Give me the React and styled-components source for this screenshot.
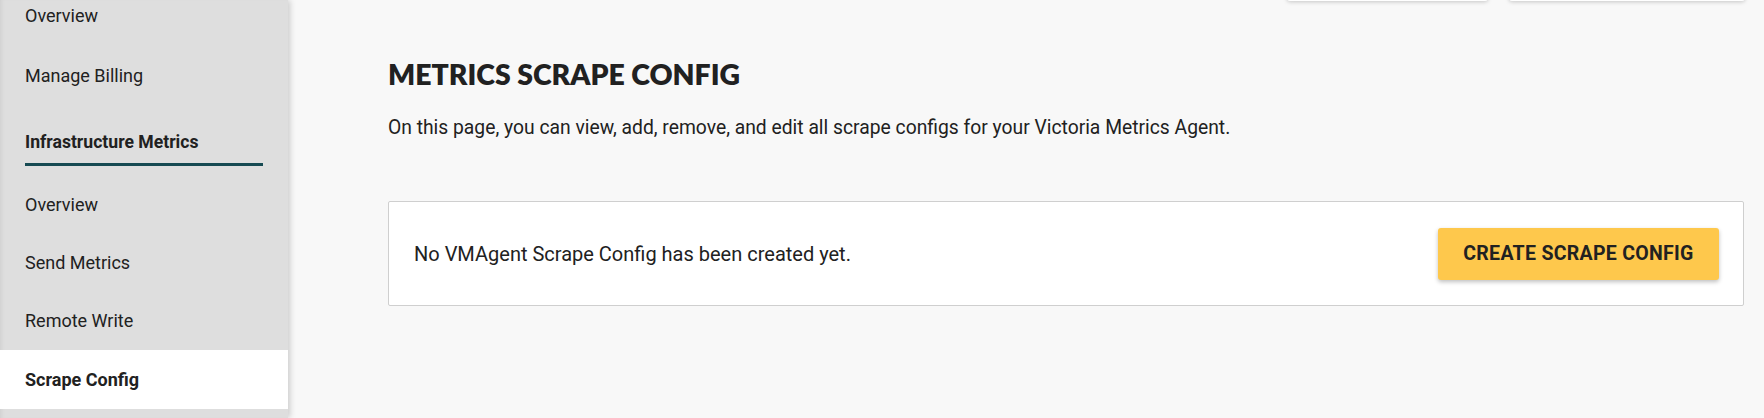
import React from 'react';
import styled, { createGlobalStyle } from 'styled-components';

const navTop = [
    { label: 'Overview', height: 60 },
    { label: 'Manage Billing', height: 60 },
];

const navMetrics = [
    { label: 'Overview', height: 58 },
    { label: 'Send Metrics', height: 58 },
    { label: 'Remote Write', height: 59 },
    { label: 'Scrape Config', height: 59, active: true },
];

function App() {
    return (
        <>
            <GlobalStyle />
            <Page>
                <Sidebar>
                    <NavList>
                        {navTop.map((item) => (
                            <NavItem key={item.label} $height={item.height}>{item.label}</NavItem>
                        ))}
                        <SectionTitle>Infrastructure Metrics</SectionTitle>
                        {navMetrics.map((item) => (
                            <NavItem key={item.label + item.height} $height={item.height} $active={item.active}>
                                {item.label}
                            </NavItem>
                        ))}
                    </NavList>
                </Sidebar>
                <Main>
                    <TopActions>
                        <TopButton $width={201} />
                        <TopButton $width={236} />
                    </TopActions>
                    <Heading>METRICS SCRAPE CONFIG</Heading>
                    <Description>
                        On this page, you can view, add, remove, and edit all scrape configs for your Victoria Metrics Agent.
                    </Description>
                    <Card>
                        <EmptyText>No VMAgent Scrape Config has been created yet.</EmptyText>
                        <PrimaryButton>Create Scrape Config</PrimaryButton>
                    </Card>
                </Main>
            </Page>
        </>
    );
}

export default App;

//////////////////////////////////////////////STYLING COMPONENTS BELOW///////////////////////////////////////////

const GlobalStyle = createGlobalStyle`
    html, body {
        margin:0;
        padding:0;
        background:#f8f8f8;
        overflow:hidden;
    }
    body {
        font-family:Roboto, "Liberation Sans", sans-serif;
        color:#212121;
    }
`;

const Page = styled.div`
    display:flex;
    height:100vh;
    background:#f8f8f8;
`;

const Sidebar = styled.aside`
    width:288px;
    flex-shrink:0;
    background:#dedede;
    box-shadow:2px 0 6px rgba(0,0,0,0.18), inset 4px 0 4px -3px rgba(0,0,0,0.08);
    position:relative;
    z-index:1;
    overflow:hidden;
`;

const NavList = styled.nav`
    display:flex;
    flex-direction:column;
    margin-top:-15px;
`;

const NavItem = styled.div`
    height:${(p) => p.$height}px;
    display:flex;
    align-items:center;
    padding-left:25px;
    font-size:18px;
    font-weight:${(p) => (p.$active ? 700 : 400)};
    background:${(p) => (p.$active ? '#ffffff' : 'transparent')};
    color:#212121;
`;

const SectionTitle = styled.div`
    margin:0 25px;
    padding-top:27px;
    padding-bottom:11px;
    margin-bottom:9px;
    line-height:20px;
    font-size:17.6px;
    font-weight:700;
    border-bottom:3px solid #164a52;
`;

const Main = styled.main`
    flex:1;
    display:flex;
    flex-direction:column;
    padding:0 20px 0 100px;
`;

const TopActions = styled.div`
    display:flex;
    justify-content:flex-end;
    gap:21px;
    margin-top:-40px;
    margin-right:-1px;
`;

const TopButton = styled.div`
    width:${(p) => p.$width}px;
    height:41px;
    background:#ffffff;
    border-radius:3px;
    box-shadow:0 1px 4px rgba(0,0,0,0.2);
`;

const Heading = styled.h1`
    margin:56px 0 0;
    font-family:Lato, "Open Sans", sans-serif;
    font-weight:800;
    font-size:28.4px;
    line-height:34px;
    color:#212121;
`;

const Description = styled.p`
    margin:24px 0 0;
    font-size:19.3px;
    line-height:26px;
    color:#212121;
`;

const Card = styled.section`
    margin-top:60px;
    height:103px;
    display:flex;
    align-items:center;
    justify-content:space-between;
    padding:0 24px 0 25px;
    background:#ffffff;
    border:1px solid #cfcfcf;
    border-radius:2px;
`;

const EmptyText = styled.span`
    font-size:20px;
    color:#212121;
`;

const PrimaryButton = styled.button`
    width:281px;
    height:52px;
    border:none;
    border-radius:3px;
    background:#fec84c;
    box-shadow:0 2px 4px rgba(0,0,0,0.25);
    font-family:Roboto, "Liberation Sans", sans-serif;
    font-size:19.5px;
    font-weight:700;
    letter-spacing:0.3px;
    text-transform:uppercase;
    color:#212121;
    cursor:pointer;
`;
